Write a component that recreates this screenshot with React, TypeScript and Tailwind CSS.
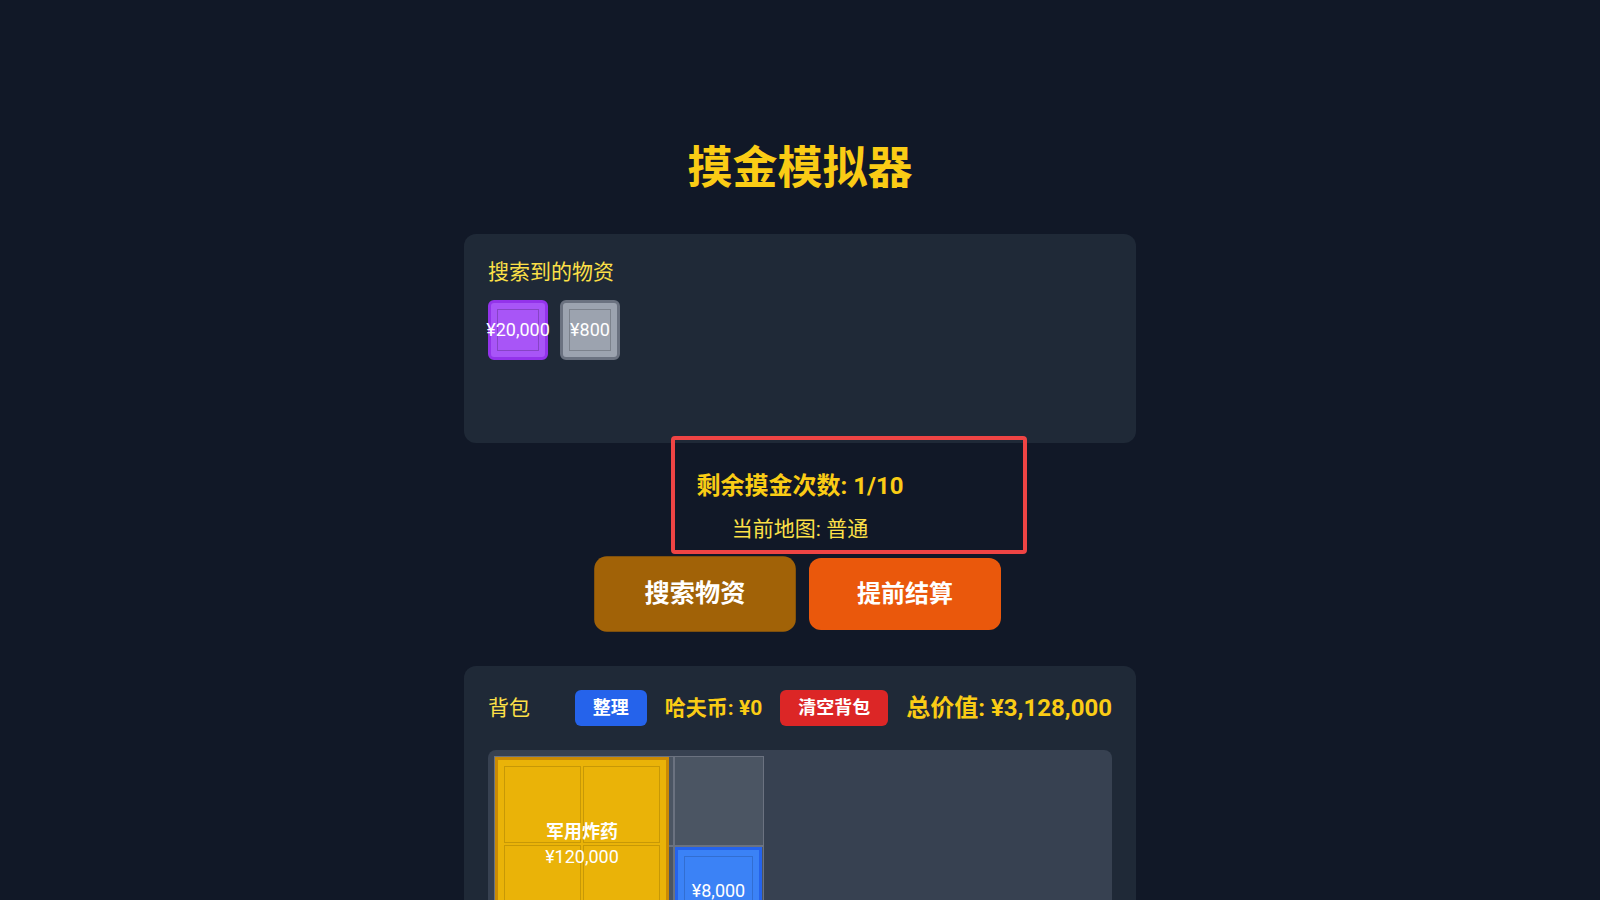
import React from "react";

type Loot = { price: string; bg: string; border: string };

const found: Loot[] = [
  { price: "¥20,000", bg: "bg-[#a855f7]", border: "border-[#9333ea]" },
  { price: "¥800", bg: "bg-[#9ca3af]", border: "border-[#6b7280]" },
];

type BagItem = {
  name?: string;
  price: string;
  col: number;
  row: number;
  w: number;
  h: number;
  bg: string;
  border: string;
};

const bagItems: BagItem[] = [
  { name: "军用炸药", price: "¥120,000", col: 0, row: 0, w: 2, h: 2, bg: "bg-[#eab308]", border: "border-[#ca8a04]" },
  { price: "¥8,000", col: 2, row: 1, w: 1, h: 1, bg: "bg-[#3b82f6]", border: "border-[#2563eb]" },
];

const ROWS = 5;
const COLS = 3;

function FoundItem({ item }: { item: Loot }) {
  return (
    <div className={`relative w-[60px] h-[60px] rounded-md border-[3px] ${item.bg} ${item.border}`}>
      <div className="absolute inset-[6px] border border-black/20" />
      <div className="absolute inset-0 flex items-center justify-center text-lg text-white whitespace-nowrap">
        {item.price}
      </div>
    </div>
  );
}

function Item({ item }: { item: BagItem }) {
  const squares = Array.from({ length: item.w * item.h });
  return (
    <div
      className={`absolute border-[3px] ${item.bg} ${item.border}`}
      style={{ left: item.col * 90 + 1, top: item.row * 90 + 1, width: item.w * 87, height: item.h * 87 }}
    >
      <div
        className="absolute inset-[6px] grid gap-0.5"
        style={{ gridTemplateColumns: `repeat(${item.w}, 1fr)`, gridTemplateRows: `repeat(${item.h}, 1fr)` }}
      >
        {squares.map((_, i) => (
          <div key={i} className="border border-black/15" />
        ))}
      </div>
      <div className="absolute inset-0 flex flex-col items-center justify-center text-white text-lg leading-[25px] whitespace-nowrap">
        {item.name && <div className="font-bold">{item.name}</div>}
        <div>{item.price}</div>
      </div>
    </div>
  );
}

export default function App() {
  return (
    <div className="min-h-screen bg-[#111827] font-[Roboto,'Noto_Sans_CJK_SC',sans-serif]">
      <div className="mx-auto w-[672px] pt-[146px] pb-10">
        <h1 className="text-center text-[45px] leading-none font-bold text-[#facc15] mb-[43px]">摸金模拟器</h1>

        <div className="bg-[#1f2937] rounded-xl p-6">
          <h2 className="text-[21px] leading-7 text-[#fde047] mb-3.5">搜索到的物资</h2>
          <div className="flex gap-3 items-start min-h-[119px]">
            {found.map((f, i) => (
              <FoundItem key={i} item={f} />
            ))}
          </div>
        </div>

        <div className="relative pt-[27px] text-center">
          <div className="absolute top-[-7px] left-[207px] w-[356px] h-[118px] border-4 border-[#ef4444] rounded-sm" />
          <div className="text-2xl font-bold text-[#facc15]">剩余摸金次数: 1/10</div>
          <div className="mt-[13px] text-[21px] leading-7 text-[#fde047]">当前地图: 普通</div>
          <div className="mt-[15px] flex justify-center gap-[18px]">
            <button className="scale-[1.05] rounded-xl bg-[#a16207] px-12 py-5 text-2xl font-bold text-white">
              搜索物资
            </button>
            <button className="rounded-xl bg-[#ea580c] px-12 py-5 text-2xl font-bold text-white">提前结算</button>
          </div>
        </div>

        <div className="mt-9 bg-[#1f2937] rounded-xl p-6">
          <div className="flex items-center justify-between mb-6">
            <span className="text-[21px] leading-7 text-[#fde047]">背包</span>
            <div className="flex items-center gap-[18px]">
              <button className="rounded-md bg-[#2563eb] px-[18px] py-1 text-lg font-bold text-white">整理</button>
              <span className="text-[21px] leading-7 font-bold text-[#facc15]">哈夫币: ¥0</span>
              <button className="rounded-md bg-[#dc2626] px-[18px] py-1 text-lg font-bold text-white">清空背包</button>
              <span className="text-2xl font-bold text-[#facc15]">总价值: ¥3,128,000</span>
            </div>
          </div>
          <div className="bg-[#374151] rounded-lg p-1.5">
            <div className="relative grid grid-cols-[repeat(3,90px)] w-fit">
              {Array.from({ length: ROWS * COLS }).map((_, i) => (
                <div key={i} className="w-[90px] h-[90px] bg-[#4b5563] border border-[#6b7280]" />
              ))}
              {bagItems.map((it, i) => (
                <Item key={i} item={it} />
              ))}
            </div>
          </div>
        </div>
      </div>
    </div>
  );
}
